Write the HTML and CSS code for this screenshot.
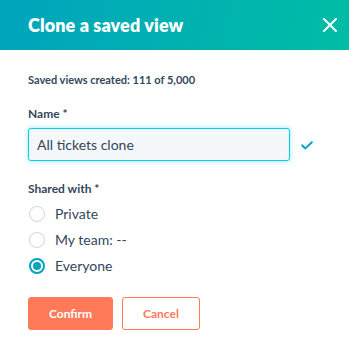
FILE: index.html
```html
<!DOCTYPE html>
<html lang="en">
<head>
    <meta charset="UTF-8">
    <title>Clone a saved view</title>
    <link rel="stylesheet" href="styles.css">
</head>
<body>
    <div class="dialog">
        <header class="dialog-header">
            <h2>Clone a saved view</h2>
            <button class="close-btn" aria-label="Close">
                <svg width="14" height="14" viewBox="0 0 14 14">
                    <path d="M1 1 L13 13 M13 1 L1 13" stroke="#fff" stroke-width="2" stroke-linecap="round"/>
                </svg>
            </button>
        </header>

        <div class="dialog-body">
            <p class="count">Saved views created: 111 of 5,000</p>

            <label class="field-label" for="name">Name *</label>
            <div class="input-row">
                <input type="text" id="name" class="text-input" value="All tickets clone">
                <svg class="check" width="12" height="9" viewBox="0 0 12 9">
                    <path d="M1.2 4.4 L4.4 7.4 L10.8 1.2" fill="none" stroke="#00a4bd" stroke-width="2" stroke-linecap="round" stroke-linejoin="round"/>
                </svg>
            </div>

            <div class="field-label shared">Shared with *</div>
            <div class="radio-list">
                <label class="radio"><span class="dot"></span>Private</label>
                <label class="radio"><span class="dot"></span>My team: --</label>
                <label class="radio"><span class="dot checked"></span>Everyone</label>
            </div>

            <div class="actions">
                <button class="btn btn-primary">Confirm</button>
                <button class="btn btn-secondary">Cancel</button>
            </div>
        </div>
    </div>
</body>
</html>
```
FILE: styles.css
```css
body {
    margin: 0;
    padding: 0;
    background-color: #fff;
    font-family: 'Lato', 'Noto Sans', sans-serif;
    color: #33475b;
}

.dialog {
    width: 349px;
    height: 346px;
    background-color: #fff;
}

.dialog-header {
    height: 50px;
    padding: 0 12px 0 28px;
    display: flex;
    align-items: center;
    justify-content: space-between;
    background: linear-gradient(100deg, #00a4bd 0%, #00bda5 100%);
}

.dialog-header h2 {
    margin: 0;
    color: #fff;
    font-size: 18px;
    font-weight: 800;
    letter-spacing: 0.1px;
}

.close-btn {
    background: none;
    border: none;
    padding: 0;
    width: 14px;
    height: 14px;
    margin-top: -1px;
    display: flex;
}

.dialog-body {
    padding: 22px 28px 0;
}

.count {
    margin: 0 0 18px;
    font-size: 11px;
    font-weight: 700;
    line-height: 16px;
}

.field-label {
    display: block;
    font-size: 12px;
    font-weight: 700;
    line-height: 16px;
    margin-bottom: 6px;
}

.input-row {
    display: flex;
    align-items: center;
    gap: 11px;
}

.text-input {
    width: 262px;
    height: 33px;
    box-sizing: border-box;
    border: 1px solid #00d0e4;
    border-radius: 3px;
    background-color: #f5f8fa;
    box-shadow: 0 0 4px 1px rgba(0, 208, 228, 0.3);
    padding: 0 8px;
    font-family: inherit;
    font-size: 14px;
    color: #33475b;
    outline: none;
}

.check {
    margin-top: 2px;
}

.shared {
    margin-top: 20px;
    margin-bottom: 9px;
}

.radio-list {
    display: flex;
    flex-direction: column;
    gap: 10px;
}

.radio {
    display: flex;
    align-items: center;
    gap: 10px;
    font-size: 14px;
    line-height: 16px;
    padding-left: 1px;
}

.dot {
    width: 16px;
    height: 16px;
    box-sizing: border-box;
    border: 1px solid #cbd6e2;
    border-radius: 50%;
    background-color: #fff;
    position: relative;
}

.dot.checked {
    border: 2px solid #00a4bd;
}

.dot.checked::after {
    content: '';
    position: absolute;
    top: 2px;
    left: 2px;
    width: 8px;
    height: 8px;
    border-radius: 50%;
    background-color: #00a4bd;
}

.actions {
    display: flex;
    gap: 9px;
    margin-top: 23px;
}

.btn {
    height: 33px;
    border-radius: 3px;
    font-family: inherit;
    font-size: 12px;
    font-weight: 700;
    padding: 0;
}

.btn-primary {
    width: 85px;
    background-color: #ff7a59;
    border: 1px solid #ff7a59;
    color: #fff;
}

.btn-secondary {
    width: 78px;
    background-color: #fff;
    border: 1px solid #ff7a59;
    color: #ff7a59;
}
```
